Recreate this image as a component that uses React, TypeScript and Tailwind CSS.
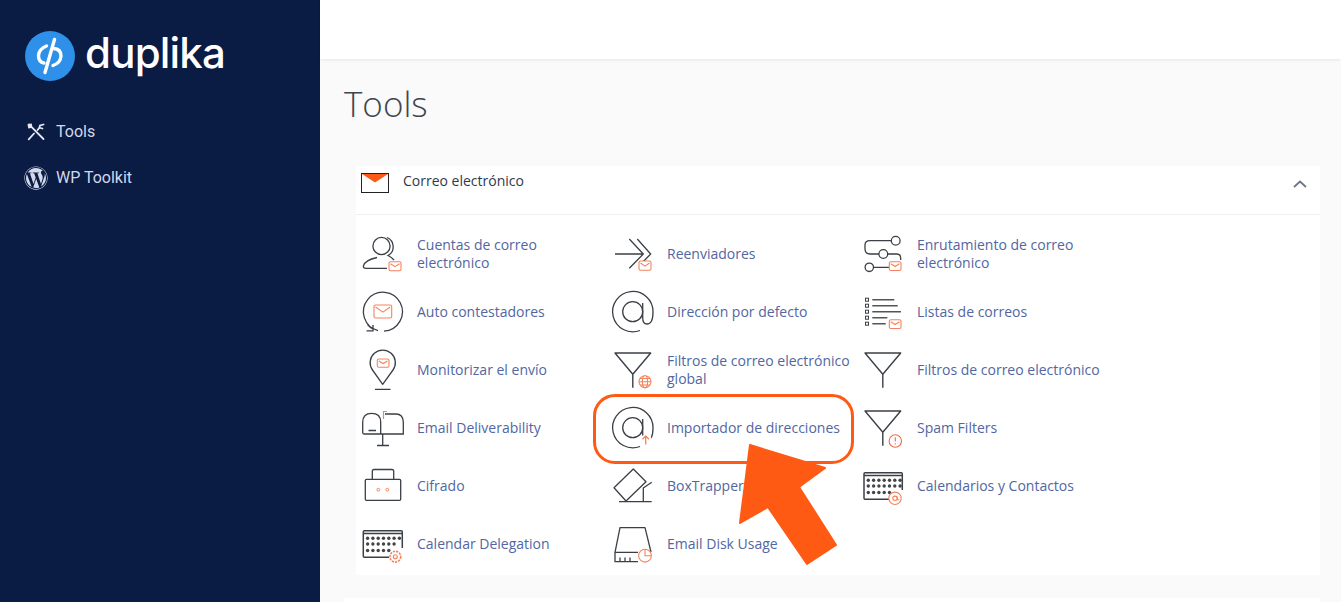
import { ReactNode } from "react";
import { FaWordpress } from "react-icons/fa";

const ORANGE = "#f4835f";
const INK = "#3b3f46";

function Env({ x, y, w, h }: { x: number; y: number; w: number; h: number }) {
  return (
    <g stroke={ORANGE} fill="#fff" strokeWidth={1.1}>
      <rect x={x} y={y} width={w} height={h} rx={1.5} />
      <path d={`M${x + 1.5} ${y + 2}L${x + w / 2} ${y + h * 0.55}L${x + w - 1.5} ${y + 2}`} fill="none" />
    </g>
  );
}

function Funnel() {
  return <path d="M5 6H40.7L22.8 27.3ZM22.8 27.3V40.7" fill="none" stroke={INK} strokeWidth={1.4} strokeLinejoin="round" />;
}

function CalendarBase({ x, w, rows }: { x: number; w: number; rows: number[] }) {
  const ys = [17.3, 23, 29.5];
  return (
    <g>
      <path
        d={`M${x + w - 4} 36.3H${x + 1}Q${x} 36.3 ${x} 35V11Q${x} 9.7 ${x + 1} 9.7H${x + w - 1}Q${x + w} 9.7 ${x + w} 11V27`}
        fill="none"
        stroke={INK}
        strokeWidth={1.5}
      />
      <path d={`M${x} 12.5H${x + w}`} stroke={INK} strokeWidth={1.3} />
      {rows.map((count, r) =>
        Array.from({ length: count }).map((_, i) => (
          <circle key={`${r}-${i}`} cx={x + 4.3 + i * 5.3} cy={ys[r]} r={1.7} fill="#444" />
        )),
      )}
    </g>
  );
}

function AtRing() {
  return (
    <g fill="none" stroke={INK} strokeWidth={1.3}>
      <circle cx={22.7} cy={22.7} r={10} />
      <path d="M32.7 14V29Q32.7 35 37 35Q43 35 43 23A20.2 20.2 0 1 0 30 41.5" />
    </g>
  );
}

const icons: Record<string, ReactNode> = {
  accounts: (
    <>
      <g fill="none" stroke={INK} strokeWidth={1.3}>
        <circle cx={21.5} cy={15} r={8.6} />
        <path d="M27 6.5A10 10 0 0 1 28 24.5Q32 26.5 34 29" />
        <path d="M27 37.3H6Q3 37.3 3.4 35Q5 29 17 26.5" />
      </g>
      <Env x={29} y={30.7} w={12} h={9} />
    </>
  ),
  forward: (
    <>
      <path d="M5 23H33.3M19.3 8L33.3 23L19.3 37.3M27.3 8L40.7 23L30 34" fill="none" stroke={INK} strokeWidth={1.3} />
      <Env x={29} y={30} w={12} h={9.3} />
    </>
  ),
  routing: (
    <>
      <g fill="none" stroke={INK} strokeWidth={1.3}>
        <circle cx={35.7} cy={9.7} r={4.4} />
        <circle cx={23.3} cy={23} r={4.4} />
        <circle cx={9.3} cy={36.3} r={4.2} />
        <path d="M31.3 9.7H10Q5 9.7 5 14V18Q5 23 10 23H18.9M27.7 23H36.5Q40.7 23 40.7 27V29M13.5 36.3H29" />
      </g>
      <Env x={29.3} y={30.7} w={11.7} h={8.8} />
    </>
  ),
  auto: (
    <>
      <path d="M18 41.6A19.5 19.5 0 1 1 24 42.2M7.5 35.5A19.5 19.5 0 0 0 13 40M6.5 41.8H13V36" fill="none" stroke={INK} strokeWidth={1.3} />
      <Env x={14} y={16} w={17.7} h={13} />
    </>
  ),
  defaultAddr: <AtRing />,
  lists: (
    <>
      <g fill="#fff" stroke={INK} strokeWidth={1}>
        {[10.7, 16.7, 22.7, 28.7, 34.7].map((y) => (
          <rect key={y} x={5.5} y={y - 1.5} width={3} height={3} />
        ))}
      </g>
      <path d="M12.3 10.7H34.3M12.3 16.7H37.7M12.3 22.7H41M12.3 28.7H27.3M12.3 34.7H25.7" stroke="#555" strokeWidth={1.4} />
      <Env x={29.3} y={30.7} w={11.7} h={8.8} />
    </>
  ),
  track: (
    <>
      <path d="M22.7 37.3L12.5 23A12.6 12.6 0 1 1 33 23ZM15 42.3H30.5" fill="none" stroke={INK} strokeWidth={1.3} strokeLinejoin="round" />
      <Env x={17.3} y={12} w={11.7} h={8.3} />
    </>
  ),
  filterGlobal: (
    <>
      <Funnel />
      <g fill="#fff" stroke={ORANGE} strokeWidth={1.1}>
        <circle cx={35} cy={34.7} r={6} />
        <ellipse cx={35} cy={34.7} rx={2.6} ry={6} />
        <path d="M29 34.7H41M30 31.5H40M30 38H40" />
      </g>
    </>
  ),
  filter: <Funnel />,
  mailbox: (
    <>
      <g fill="none" stroke={INK} strokeWidth={1.3}>
        <path d="M20.7 29H4Q2.7 29 2.7 27.5V17Q3 8.3 11.5 8.3Q20.7 8.3 20.7 17V29ZM25 9H36Q43 9 43.3 17V29H20.7M22.7 29V40M17 40.5H29M8.5 25.5H16" />
      </g>
      <path d="M23.5 14V6.5H27" fill="none" stroke={ORANGE} strokeWidth={1.2} />
    </>
  ),
  importer: (
    <>
      <AtRing />
      <circle cx={36} cy={35.5} r={6} fill="#fff" />
      <path d="M35.7 39.5V31M32.5 34.2L35.7 31L39 34.2" fill="none" stroke={ORANGE} strokeWidth={1.3} />
    </>
  ),
  spam: (
    <>
      <Funnel />
      <circle cx={35.3} cy={36} r={6.2} fill="#fff" stroke="#ee6a4a" strokeWidth={1.1} />
      <path d="M35.3 32.3V36.6M35.3 38.2V39.4" stroke="#ee6a4a" strokeWidth={1.1} />
    </>
  ),
  lock: (
    <>
      <rect x={5.3} y={16.3} width={35.4} height={21} rx={1.2} fill="none" stroke={INK} strokeWidth={1.3} />
      <path d="M12.3 16.3V8.5Q12.3 6.5 14 6.5H32Q33.7 6.5 33.7 8.5V16.3" fill="none" stroke={INK} strokeWidth={1.3} />
      <circle cx={18.3} cy={26.7} r={1.4} fill="none" stroke={ORANGE} />
      <circle cx={27.3} cy={26.7} r={1.4} fill="none" stroke={ORANGE} />
    </>
  ),
  boxtrapper: (
    <path
      d="M23.3 6L36 18.7L16 38L4 24.7ZM33.3 38V25L41.7 19.3M9 38.7H41.7"
      fill="none"
      stroke={INK}
      strokeWidth={1.3}
      strokeLinejoin="round"
    />
  ),
  calContacts: (
    <>
      <CalendarBase x={4} w={38.3} rows={[7, 7, 5]} />
      <circle cx={35} cy={35.3} r={6.2} fill="#fff" stroke={ORANGE} strokeWidth={1.1} />
      <circle cx={35} cy={35.3} r={2.2} fill="none" stroke={ORANGE} strokeWidth={1.1} />
      <path d="M37.2 33.5V36.5Q38.5 38 39.3 36" fill="none" stroke={ORANGE} strokeWidth={1} />
    </>
  ),
  calDelegation: (
    <>
      <CalendarBase x={3.3} w={39} rows={[7, 6, 5]} />
      <circle cx={35.3} cy={35.7} r={6.4} fill="#fff" />
      <circle cx={35.3} cy={35.7} r={5.4} fill="none" stroke={ORANGE} strokeWidth={1.6} strokeDasharray="2.2 1" />
      <circle cx={35.3} cy={35.7} r={2} fill="none" stroke={ORANGE} strokeWidth={1.1} />
    </>
  ),
  disk: (
    <>
      <path d="M5 31.3L10 6.7H35L41 31M5 31.3H28M5 31.3V40.7H28M10 36.5V40.7M15 36.5V40.7M20 36.5V40.7" fill="none" stroke={INK} strokeWidth={1.3} strokeLinejoin="round" />
      <circle cx={35} cy={34.7} r={6.4} fill="#fff" stroke={ORANGE} strokeWidth={1.1} />
      <path d="M35 28.3V34.7H41.4" fill="none" stroke={ORANGE} strokeWidth={1.1} />
    </>
  ),
};

const tools = [
  { icon: "accounts", label: "Cuentas de correo electrónico" },
  { icon: "forward", label: "Reenviadores" },
  { icon: "routing", label: "Enrutamiento de correo electrónico" },
  { icon: "auto", label: "Auto contestadores" },
  { icon: "defaultAddr", label: "Dirección por defecto" },
  { icon: "lists", label: "Listas de correos" },
  { icon: "track", label: "Monitorizar el envío" },
  { icon: "filterGlobal", label: "Filtros de correo electrónico global" },
  { icon: "filter", label: "Filtros de correo electrónico" },
  { icon: "mailbox", label: "Email Deliverability" },
  { icon: "importer", label: "Importador de direcciones", highlight: true },
  { icon: "spam", label: "Spam Filters" },
  { icon: "lock", label: "Cifrado" },
  { icon: "boxtrapper", label: "BoxTrapper" },
  { icon: "calContacts", label: "Calendarios y Contactos" },
  { icon: "calDelegation", label: "Calendar Delegation" },
  { icon: "disk", label: "Email Disk Usage" },
];

function Logo() {
  return (
    <div className="flex items-center gap-[10px] pl-[25px] pt-[31px]">
      <svg width="50" height="50" viewBox="0 0 50 50" className="shrink-0">
        <circle cx="25" cy="25" r="25" fill="#2e90e8" />
        <g fill="none" stroke="#fff" strokeWidth="3.4" strokeLinecap="round">
          <path d="M29.5 8.5L20 41.5" />
          <path d="M21.5 15Q14 18 13.5 24.5Q13.5 31 19 32" />
          <path d="M28.5 17.5Q36 18 36 25Q35.5 32 28 34.5" />
        </g>
      </svg>
      <span className="mt-[-6px] font-['Inter',sans-serif] text-[42px] leading-[50px] font-medium tracking-[-0.8px] text-white">duplika</span>
    </div>
  );
}

function NavItem({ icon, label }: { icon: ReactNode; label: string }) {
  return (
    <div className="flex h-[46px] items-center">
      <div className="flex w-[56px] justify-center pl-[16px]">{icon}</div>
      <span className="font-['Roboto',sans-serif] text-[16px] text-[#d3d8ea]">{label}</span>
    </div>
  );
}

export default function App() {
  return (
    <div className="relative flex h-[602px] overflow-hidden bg-[#fafafa] font-['Open_Sans',sans-serif]">
      <aside className="w-[320px] shrink-0 bg-[#0a1b44]">
        <Logo />
        <nav className="mt-[28px]">
          <NavItem
            label="Tools"
            icon={
              <svg width="20" height="20" viewBox="0 0 20 20" fill="none" stroke="#e6e9f2" strokeWidth="1.8" strokeLinecap="round">
                <path d="M3 2.5L5.2 4.7L17.5 17M2.5 3L5 2.5L5.5 5L3 5.5Z" />
                <path d="M17.5 2.5L14 3.5L13.2 6L11.5 8M16.5 6.5L14.5 6M8 11.5L2.7 17.3" />
              </svg>
            }
          />
          <NavItem label="WP Toolkit" icon={<FaWordpress className="text-[24px] text-[#d3d8ea]" />} />
        </nav>
      </aside>

      <main className="flex min-w-0 flex-1 flex-col">
        <header className="h-[59px] shrink-0 bg-white shadow-[0_1px_3px_rgba(0,0,0,0.08)]" />
        <div className="pl-[24px] pr-[21px]">
          <h1 className="mt-[20px] h-[50px] text-[35px] leading-[50px] font-light text-[#3f4650]">Tools</h1>
          <section className="mt-[37px] ml-[12px] bg-white">
            <div className="flex h-[49px] items-start border-b border-[#f0f0f0] pl-[5px] pr-[12px]">
              <svg width="28" height="20" viewBox="0 0 28 20" className="mt-[7px] shrink-0">
                <rect x="0.5" y="0.5" width="27" height="19" fill="#fff" stroke="#222" />
                <path d="M1 1H27L14 9.5Z" fill="#fb5a17" />
              </svg>
              <span className="ml-[14px] mt-[5px] text-[14px] leading-[20px] text-[#2f3a4a]">Correo electrónico</span>
              <svg width="16" height="10" viewBox="0 0 16 10" className="ml-auto mt-[13px]" fill="none" stroke="#6e7586" strokeWidth="1.8">
                <path d="M2 8L8 2.5L14 8" />
              </svg>
            </div>
            <div className="grid grid-cols-[250px_250px_250px] pb-[2px] pl-[4px] pt-[10px]">
              {tools.map((tool) => (
                <div key={tool.label} className="relative flex h-[58px] items-center gap-[11px]">
                  {tool.highlight && (
                    <div className="absolute left-[-17px] top-[-5px] h-[70px] w-[261px] rounded-[22px] border-[3px] border-[#ff5a14]" />
                  )}
                  <svg width="46" height="46" viewBox="0 0 46 46" className="shrink-0">
                    {icons[tool.icon]}
                  </svg>
                  <span className="w-[190px] text-[14px] leading-[18px] text-[#5266a2]">{tool.label}</span>
                </div>
              ))}
            </div>
          </section>
          <section className="mt-[23px] h-[60px] bg-white" />
        </div>
      </main>

      <svg width="1341" height="602" viewBox="0 0 1341 602" className="pointer-events-none absolute left-0 top-0">
        <path
          d="M750 445L825 468L799 487L836 545L807 564L768 507L740 523Z"
          fill="#ff5a14"
          stroke="#ff5a14"
          strokeWidth="2"
          strokeLinejoin="round"
        />
      </svg>
    </div>
  );
}
